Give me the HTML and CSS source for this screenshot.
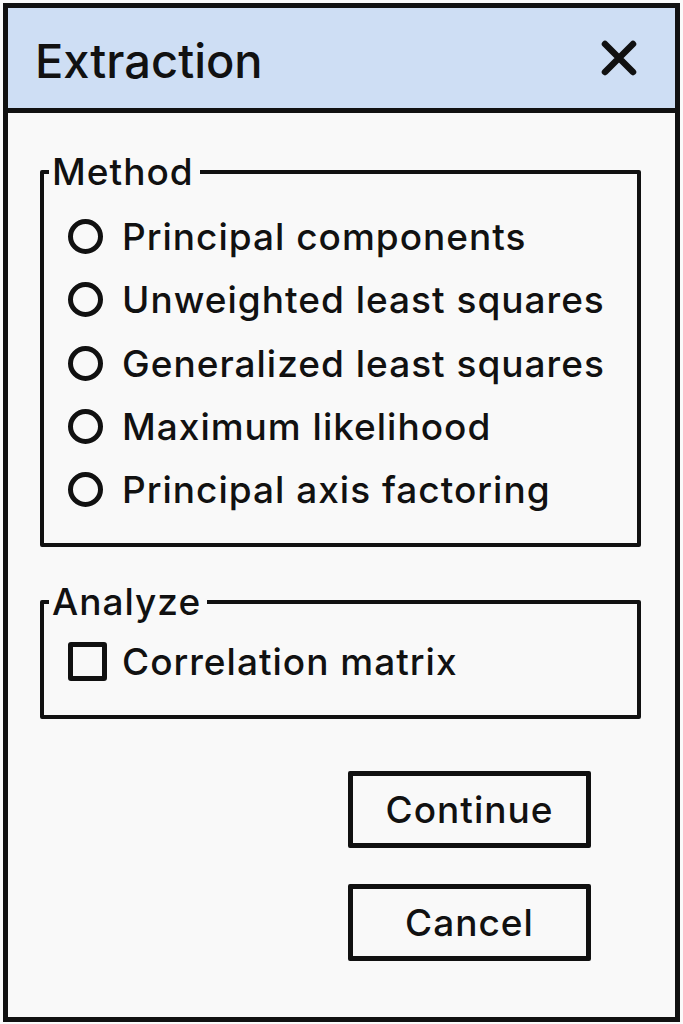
FILE: index.html
```html
<!DOCTYPE html>
<html lang="en">
<head>
<meta charset="utf-8">
<title>Extraction</title>
<link rel="stylesheet" href="styles.css">
</head>
<body>
<div class="window">
  <div class="titlebar">
    <span class="title">Extraction</span>
    <svg class="close" viewBox="0 0 40 40" width="40" height="40" aria-label="Close">
      <path d="M6 6 L34 34 M34 6 L6 34" stroke="#111" stroke-width="6.5" stroke-linecap="round" fill="none"/>
    </svg>
  </div>
  <div class="content">
    <fieldset class="group method">
      <legend class="legend">Method</legend>
      <div class="options">
        <div class="option"><span class="radio"></span><span class="label">Principal components</span></div>
        <div class="option"><span class="radio"></span><span class="label">Unweighted least squares</span></div>
        <div class="option"><span class="radio"></span><span class="label">Generalized least squares</span></div>
        <div class="option"><span class="radio"></span><span class="label">Maximum likelihood</span></div>
        <div class="option"><span class="radio"></span><span class="label">Principal axis factoring</span></div>
      </div>
    </fieldset>
    <fieldset class="group analyze">
      <legend class="legend">Analyze</legend>
      <div class="options analyze-options">
        <div class="option"><span class="checkbox"></span><span class="label">Correlation matrix</span></div>
      </div>
    </fieldset>
    <div class="buttons">
      <div class="button">Continue</div>
      <div class="button cancel">Cancel</div>
    </div>
  </div>
</div>
</body>
</html>
```

FILE: styles.css
```css
html, body {
  margin: 0;
  padding: 0;
  background: #fafafa;
}

body {
  font-family: Inter, "Liberation Sans", sans-serif;
  color: #111;
}

.window {
  box-sizing: border-box;
  width: 677px;
  height: 1019px;
  margin: 3px 3px 2px 3px;
  border: 5px solid #111;
  background: #f9f9f9;
  display: flex;
  flex-direction: column;
}

.titlebar {
  box-sizing: border-box;
  height: 105px;
  flex: none;
  background: #cedef4;
  border-bottom: 5px solid #111;
  display: flex;
  align-items: center;
  justify-content: space-between;
  padding: 0 36px 0 27px;
}

.title {
  font-size: 47px;
  line-height: 1;
  font-weight: 500;
  margin-top: 4px;
}

.close {
  display: block;
}

.content {
  display: flex;
  flex-direction: column;
  padding: 0 34px 0 32px;
}

.group {
  margin: 0;
  padding: 0;
  border: 4px solid #111;
  border-radius: 2px;
  min-width: 0;
}

.method {
  margin-top: 36px;
}

.analyze {
  margin-top: 32px;
}

.legend {
  font-size: 37px;
  line-height: 45px;
  font-weight: 500;
  letter-spacing: 1px;
  padding: 0 6px 0 3px;
  margin-left: 5px;
}

.options {
  display: flex;
  flex-direction: column;
  padding: 11px 0 22px 24px;
}

.analyze-options {
  padding: 6px 0 21px 24px;
}

.option {
  display: flex;
  align-items: center;
  height: 63.25px;
}

.label {
  font-size: 37px;
  font-weight: 500;
  letter-spacing: 1px;
  line-height: 1;
}

.radio {
  box-sizing: border-box;
  width: 35px;
  height: 35px;
  border: 5px solid #111;
  border-radius: 50%;
  margin-right: 19px;
  flex: none;
}

.checkbox {
  box-sizing: border-box;
  width: 39px;
  height: 39px;
  border: 5px solid #111;
  border-radius: 3px;
  margin-right: 15px;
  flex: none;
}

.buttons {
  display: flex;
  flex-direction: column;
  align-items: flex-end;
  gap: 36px;
  margin-top: 52px;
  padding-right: 50px;
}

.button {
  box-sizing: border-box;
  width: 243px;
  height: 77px;
  border: 5px solid #111;
  border-radius: 2px;
  display: flex;
  align-items: center;
  justify-content: center;
  font-size: 37px;
  font-weight: 500;
  letter-spacing: 1px;
}
```
